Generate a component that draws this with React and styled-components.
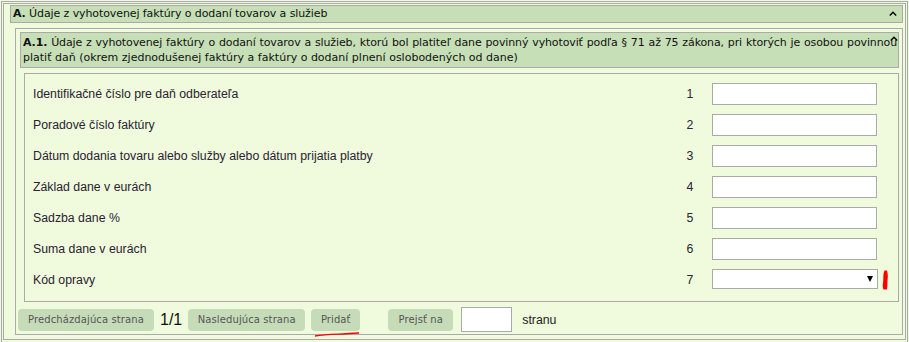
import React from 'react';
import styled, { createGlobalStyle } from 'styled-components';

const GlobalStyle = createGlobalStyle`
  html, body {
    margin: 0;
    padding: 0;
    background: #effbdc;
  }
  body {
    font-family: "Liberation Sans", Arial, sans-serif;
    overflow: hidden;
  }
`;

const Page = styled.div`
  margin: 1px 0 0 1px;
  width: 903px;
  height: 400px;
  padding: 1px;
  border: 1px solid #aaa;
  box-sizing: content-box;
`;

const Section = styled.div`
  border: 1px solid #aaa;
  padding: 1px 2px 4px 6px;
`;

const SectionHeader = styled.div`
  position: relative;
  height: 16px;
  border: 1px solid #aaa;
  background: #c6dfb6;
  padding: 0 2px;
  font-family: "DejaVu Sans", sans-serif;
  font-size: 11px;
  letter-spacing: -0.1px;
  line-height: 16px;
  color: #111;

  b {
    font-weight: bold;
  }
`;

const Caret = styled.svg`
  position: absolute;
  right: ${(p) => p.$right}px;
  top: ${(p) => p.$top}px;
`;

const SubSection = styled.div`
  margin: 5px 0 0 5px;
  border: 1px solid #aaa;
  padding: 3px 3px 2px 1px;
`;

const SubHeader = styled.div`
  position: relative;
  margin-left: 3px;
  border: 1px solid #aaa;
  background: #c6dfb6;
  padding: 2px 1px 2px 2px;
  font-family: "DejaVu Sans", sans-serif;
  font-size: 11px;
  line-height: 15px;
  color: #111;
`;

const JustLine = styled.span`
  display: block;
  white-space: nowrap;
  letter-spacing: -0.12px;
  text-align: justify;
  text-align-last: justify;
`;

const Fields = styled.div`
  margin: 5px 0 0 7px;
  border: 1px solid #aaa;
  padding: 9px 20px 10px 8px;
  display: flex;
  flex-direction: column;
  gap: 9px;
`;

const Row = styled.div`
  display: grid;
  grid-template-columns: 1fr 30px 166px;
  column-gap: 7px;
  align-items: center;
  height: 22px;
`;

const Label = styled.div`
  font-size: 12.3px;
  color: #2b2233;
`;

const Num = styled.div`
  font-size: 12.3px;
  color: #2b2233;
  text-align: center;
`;

const TextInput = styled.input`
  box-sizing: border-box;
  width: 165px;
  height: 22px;
  border: 1px solid #aaa;
  background: #fff;
  padding: 0 4px;
  margin: 0;
`;

const SelectWrap = styled.div`
  position: relative;
  display: flex;
  align-items: center;
  align-self: start;
`;

const Select = styled.select`
  appearance: none;
  box-sizing: border-box;
  width: 167px;
  height: 20px;
  border: 1px solid #aaa;
  background: #fff;
  margin: 0;
`;

const Arrow = styled.span`
  position: absolute;
  left: 155px;
  top: 7px;
  width: 0;
  height: 0;
  border-left: 3.5px solid transparent;
  border-right: 3.5px solid transparent;
  border-top: 6px solid #000;
  pointer-events: none;
`;

const Mark = styled.svg`
  position: absolute;
  left: 169px;
  top: 1px;
`;

const Footer = styled.div`
  display: flex;
  align-items: center;
  margin-top: 5px;
  height: 25px;
  padding-left: 1px;
`;

const Button = styled.button`
  position: relative;
  box-sizing: border-box;
  width: ${(p) => p.$w}px;
  height: 22px;
  margin: 0 ${(p) => p.$mr || 0}px 0 0;
  border: none;
  border-radius: 4px;
  background: #c6dcb8;
  color: #555;
  font-family: "DejaVu Sans", sans-serif;
  font-size: 10px;
  letter-spacing: 0.1px;
  padding: 0;
  text-align: center;
`;

const PageCount = styled.span`
  font-size: 16px;
  color: #111;
  margin-right: 6px;
`;

const Underline = styled.svg`
  position: absolute;
  left: 2px;
  top: 22px;
`;

const PageInput = styled.input`
  box-sizing: border-box;
  width: 51px;
  height: 25px;
  border: 1px solid #aaa;
  background: #fff;
  margin: 0 10px 0 0;
`;

const Stranu = styled.span`
  font-size: 12.3px;
  color: #222;
`;

function UpCaret({ right, top }) {
  return (
    <Caret $right={right} $top={top} width="8" height="5" viewBox="0 0 8 5">
      <path d="M0.8 4.4 L4 1.2 L7.2 4.4" fill="none" stroke="#000" strokeWidth="1.4" />
    </Caret>
  );
}

const rows = [
  ['Identifikačné číslo pre daň odberateľa', 1],
  ['Poradové číslo faktúry', 2],
  ['Dátum dodania tovaru alebo služby alebo dátum prijatia platby', 3],
  ['Základ dane v eurách', 4],
  ['Sadzba dane %', 5],
  ['Suma dane v eurách', 6],
];

export default function App() {
  return (
    <>
      <GlobalStyle />
      <Page>
        <Section>
          <SectionHeader>
            <b>A.</b> Údaje z vyhotovenej faktúry o dodaní tovarov a služieb
            <UpCaret right={5} top={5} />
          </SectionHeader>
          <SubSection>
            <SubHeader>
              <JustLine>
                <b>A.1.</b> Údaje z vyhotovenej faktúry o dodaní tovarov a služieb, ktorú bol platiteľ dane povinný vyhotoviť podľa § 71 až 75 zákona, pri ktorých je osobou povinnou
              </JustLine>
              platiť daň (okrem zjednodušenej faktúry a faktúry o dodaní plnení oslobodených od dane)
              <UpCaret right={0} top={3} />
            </SubHeader>
            <Fields>
              {rows.map(([label, n]) => (
                <Row key={n}>
                  <Label>{label}</Label>
                  <Num>{n}</Num>
                  <TextInput type="text" />
                </Row>
              ))}
              <Row>
                <Label>Kód opravy</Label>
                <Num>7</Num>
                <SelectWrap>
                  <Select defaultValue="">
                    <option value="" />
                  </Select>
                  <Arrow />
                  <Mark width="8" height="20" viewBox="0 0 8 20">
                    <path d="M3.5 0.5 C1.8 4 2.6 8 2.2 11 C1.9 14 1.2 16.5 2.4 19.5 L6 19.5 C6.6 16 6.2 12.5 6.6 9.5 C7 6.5 6.8 3.5 6 0.5 Z" fill="#f00" />
                  </Mark>
                </SelectWrap>
              </Row>
            </Fields>
            <Footer>
              <Button $w={136} $mr={6}>Predcházdajúca strana</Button>
              <PageCount>1/1</PageCount>
              <Button $w={117} $mr={6}>Nasledujúca strana</Button>
              <Button $w={49} $mr={28}>
                Pridať
                <Underline width="48" height="6" viewBox="0 0 48 6">
                  <path d="M2 5 C12 3.6 22 3.4 30 3 C36 2.7 41 1.8 46 2" fill="none" stroke="#f00" strokeWidth="1.3" />
                </Underline>
              </Button>
              <Button $w={65} $mr={8}>Prejsť na</Button>
              <PageInput type="text" />
              <Stranu>stranu</Stranu>
            </Footer>
          </SubSection>
        </Section>
      </Page>
    </>
  );
}
